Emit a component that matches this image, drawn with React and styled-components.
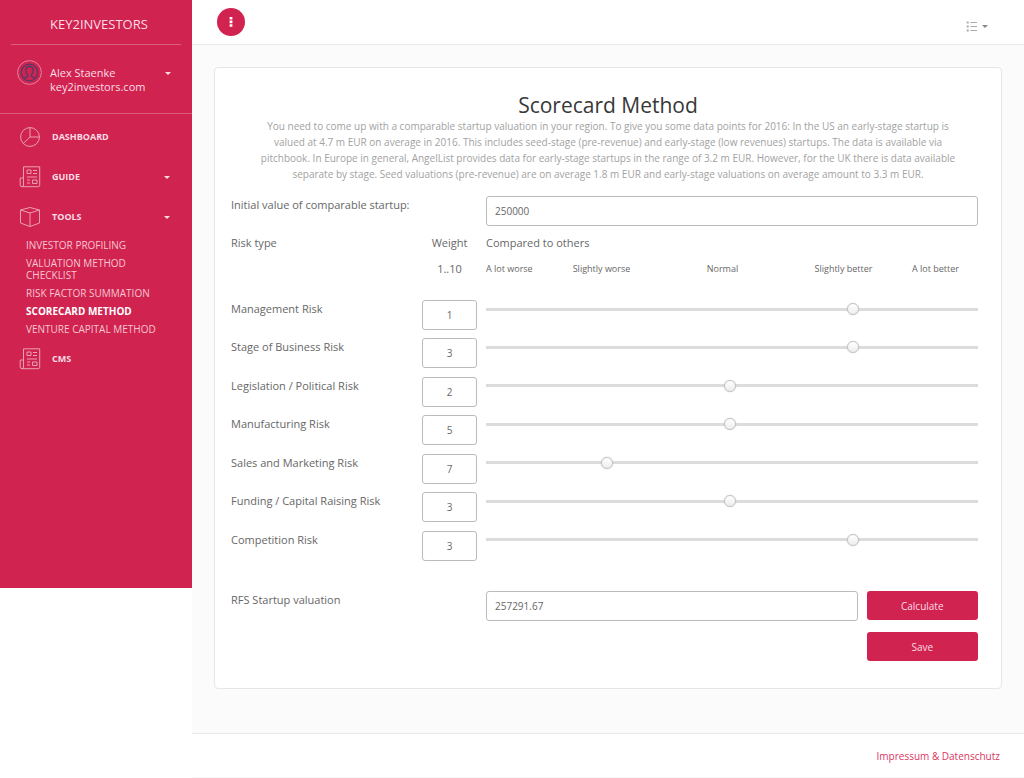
import React, { useState } from 'react';
import styled, { createGlobalStyle } from 'styled-components';

const GlobalStyle = createGlobalStyle`
  * {
    box-sizing: border-box;
  }

  body {
    margin: 0;
    background: #fff;
    color: #676767;
    font-family: 'Open Sans', 'Noto Sans', sans-serif;
    font-size: 11px;
    line-height: 18px;
  }

  input,
  button {
    font: inherit;
  }
`;

const Page = styled.div`
  display: flex;
  align-items: flex-start;
  min-height: 100vh;
`;

const Sidebar = styled.aside`
  flex: 0 0 192px;
  padding-bottom: 209px;
  background: #d02350;
  color: #fbdde5;
`;

const Brand = styled.h1`
  margin: 0 11px;
  padding: 14px 0 10px 39px;
  border-bottom: 1px solid #dd5d7f;
  font-size: 13px;
  line-height: 20px;
  font-weight: 400;
`;

const User = styled.button`
  display: flex;
  align-items: flex-start;
  width: 100%;
  height: 69px;
  padding: 15px 21px 0 17px;
  border: 0;
  border-bottom: 1px solid #dd5d7f;
  background: none;
  color: inherit;
  text-align: left;
  line-height: 14px;
`;

const Avatar = styled.svg`
  flex: none;
  width: 25px;
  height: 25px;
  margin-right: 8px;
`;

const UserName = styled.span`
  flex: 1;
  padding-top: 6px;
`;

const Caret = styled.span`
  border: 3px solid transparent;
  border-top-color: currentColor;
  border-bottom: 0;
`;

const UserCaret = styled(Caret)`
  margin-top: 12px;
`;

const Nav = styled.nav`
  padding-top: 3px;
`;

const NavItem = styled.a`
  display: flex;
  align-items: center;
  gap: 11px;
  height: 40px;
  padding: 0 22px 0 19px;
  color: inherit;
  font-size: 9px;
  font-weight: 700;
  text-decoration: none;

  svg {
    width: 22px;
    height: 22px;
    fill: none;
    stroke: #eb9fb3;
  }

  span:last-child:not(:only-of-type) {
    margin-left: auto;
  }
`;

const SubNav = styled.div`
  display: flex;
  flex-direction: column;
  padding: 0 26px;
`;

const SubItem = styled.a`
  padding: 2px 0 4px;
  color: ${(props) => (props.$active ? '#fff' : '#f6c5d1')};
  font-size: 10px;
  font-weight: ${(props) => (props.$active ? 700 : 400)};
  line-height: 12px;
  text-decoration: none;
`;

const Main = styled.div`
  flex: 1;
  display: flex;
  flex-direction: column;
  min-width: 0;
  min-height: 100vh;
`;

const TopBar = styled.header`
  display: flex;
  align-items: center;
  justify-content: space-between;
  height: 45px;
  padding: 0 36px 0 25px;
  border-bottom: 1px solid #eaeaea;
`;

const RoundButton = styled.button`
  display: flex;
  align-items: center;
  justify-content: center;
  width: 28px;
  height: 28px;
  padding: 0;
  border: 0;
  border-radius: 50%;
  background: #d02350;
  color: #fff;
`;

const ListButton = styled.button`
  display: flex;
  align-items: center;
  gap: 4px;
  padding: 9px 0 0;
  border: 0;
  background: none;
  color: #888;
`;

const Content = styled.main`
  flex: 1;
  padding: 22px 22px 44px;
  background: #fbfbfb;
`;

const Card = styled.form`
  padding: 24px 23px 27px 16px;
  border: 1px solid #e6e6e6;
  border-radius: 4px;
  background: #fff;
`;

const Intro = styled.div`
  margin-bottom: 14px;
  padding: 0 18px 0 25px;
  text-align: center;
`;

const Title = styled.h2`
  margin: 0;
  color: #383838;
  font-size: 21px;
  font-weight: 400;
  line-height: 26px;
`;

const Description = styled.p`
  margin: 0;
  color: #a2a2a2;
  font-size: 10px;
  line-height: 16px;
`;

const Row = styled.div`
  display: grid;
  grid-template-columns: 182fr 55fr 492fr;
  column-gap: 9px;
  align-items: start;
  margin-bottom: ${(props) => props.$space || 0}px;
`;

const Wide = styled.div`
  grid-column: 3;
`;

const Centered = styled.div`
  grid-column: 2;
  text-align: center;
`;

const TextInput = styled.input`
  display: block;
  width: 100%;
  height: 30px;
  padding: 0 8px;
  border: 1px solid #bbb;
  border-radius: 3px;
  background: #fff;
  color: #676767;
  font-size: 10px;
  text-align: ${(props) => (props.$center ? 'center' : 'left')};
`;

const Scale = styled.div`
  grid-column: 3;
  display: grid;
  grid-template-columns: 5fr 11fr 11fr 11fr 5fr;
  padding-right: 19px;
  font-size: 9px;
  text-align: center;
  white-space: nowrap;

  span:first-child {
    text-align: left;
  }

  span:last-child {
    text-align: right;
  }
`;

const Risks = styled.div`
  display: grid;
  grid-auto-rows: 1fr;
  min-height: 269px;
  margin-bottom: 22px;
`;

const Track = styled.div`
  display: flex;
  align-items: center;
  height: 18px;
  border-radius: 2px;
  background: linear-gradient(#dcdcdc, #dcdcdc) center / 100% 3px no-repeat;
`;

const Slider = styled.input`
  appearance: none;
  flex: none;
  width: calc(100% + 12px);
  height: 18px;
  margin: 0 -4px 0 -8px;
  background: none;

  &::-webkit-slider-thumb {
    appearance: none;
    width: 12px;
    height: 12px;
    border: 1px solid #c4c4c4;
    border-radius: 50%;
    background: linear-gradient(#fff, #ededed);
    box-shadow: 0 0 1px #aaa;
  }
`;

const Result = styled.div`
  display: grid;
  grid-template-columns: 10fr 3fr;
  align-items: start;
  gap: 9px;
`;

const Buttons = styled.div`
  display: flex;
  flex-direction: column;
  gap: 12px;
`;

const Button = styled.button`
  height: 29px;
  border: 0;
  border-radius: 3px;
  background: #d02350;
  color: #fbdde5;
  font-size: 10px;
`;

const Footer = styled.footer`
  display: flex;
  align-items: center;
  justify-content: flex-end;
  height: 45px;
  padding: 0 24px;
  border-top: 1px solid #eaeaea;
  border-bottom: 1px solid #f6f6f6;

  a {
    color: #d8365f;
    font-size: 10px;
    text-decoration: none;
  }
`;

const PieIcon = () => (
  <svg viewBox="0 0 22 22" aria-hidden="true">
    <circle cx="11" cy="11" r="9.4" />
    <path d="M11 1.6V11h9.4M11 11l-6.8 6.5" />
  </svg>
);

const NewsIcon = () => (
  <svg viewBox="0 0 22 22" aria-hidden="true">
    <path d="M4.500 19.500V.8h16.200v18.400q0 1.500-1.500 1.500H3q-1.800 0-1.800-1.800V12h3.300M4.500 19q0 1.700-1.500 1.700" />
    <path d="M8 4h4v3.500H8zM14 4.500h4M14 7.500h4M8 11h10M8 14h3M8 17h3M13.500 14H18v3.500h-4.500z" />
  </svg>
);

const BoxIcon = () => (
  <svg viewBox="0 0 22 22" aria-hidden="true">
    <path d="M11 1.500l9.500 2.500v13L11 20.500 1.500 17V4zM1.500 4L11 7l9.500-3M11 7v13.500" />
  </svg>
);

const initialRisks = [
  { name: 'Management Risk', weight: 1, value: 3 },
  { name: 'Stage of Business Risk', weight: 3, value: 3 },
  { name: 'Legislation / Political Risk', weight: 2, value: 2 },
  { name: 'Manufacturing Risk', weight: 5, value: 2 },
  { name: 'Sales and Marketing Risk', weight: 7, value: 1 },
  { name: 'Funding / Capital Raising Risk', weight: 3, value: 2 },
  { name: 'Competition Risk', weight: 3, value: 3 },
];

const tools = [
  'INVESTOR PROFILING',
  'VALUATION METHOD CHECKLIST',
  'RISK FACTOR SUMMATION',
  'SCORECARD METHOD',
  'VENTURE CAPITAL METHOD',
];

export default function App() {
  const [risks, setRisks] = useState(initialRisks);

  const update = (index, key, value) => {
    setRisks(risks.map((risk, i) => (i === index ? { ...risk, [key]: value } : risk)));
  };

  return (
    <Page>
      <GlobalStyle />
      <Sidebar>
        <Brand>KEY2INVESTORS</Brand>
        <User type="button">
          <Avatar viewBox="0 0 25 25" fill="none" aria-hidden="true">
            <circle cx="12.500" cy="12.500" r="11.900" stroke="#e4829c" />
            <circle cx="12.500" cy="12.500" r="8.300" stroke="#4f3c68" strokeWidth="1.300" />
            <path
              d="M7.500 18.200c1-1.200 3.400-1 3.400-2.600 0-1.200-2-1.900-2-5 0-2.700 1.500-4.100 3.600-4.100s3.600 1.400 3.600 4.100c0 3.100-2 3.800-2 5 0 1.600 2.400 1.400 3.400 2.600"
              stroke="#4f3c68"
              strokeWidth="1.300"
            />
          </Avatar>
          <UserName>
            Alex Staenke
            <br />
            key2investors.com
          </UserName>
          <UserCaret />
        </User>
        <Nav>
          <NavItem href="#dashboard">
            <PieIcon />
            <span>DASHBOARD</span>
          </NavItem>
          <NavItem href="#guide">
            <NewsIcon />
            <span>GUIDE</span>
            <Caret />
          </NavItem>
          <NavItem href="#tools">
            <BoxIcon />
            <span>TOOLS</span>
            <Caret />
          </NavItem>
          <SubNav>
            {tools.map((tool) => (
              <SubItem key={tool} href="#tools" $active={tool === 'SCORECARD METHOD'}>
                {tool}
              </SubItem>
            ))}
          </SubNav>
          <NavItem href="#cms">
            <NewsIcon />
            <span>CMS</span>
          </NavItem>
        </Nav>
      </Sidebar>

      <Main>
        <TopBar>
          <RoundButton type="button" aria-label="Toggle menu">
            <svg width="4" height="10" viewBox="0 0 4 10" fill="currentColor">
              <path d="M.6 0h2.800v2.600H.6zM.6 3.600h2.800v2.600H.6zM.6 7.200h2.800v2.600H.6z" />
            </svg>
          </RoundButton>
          <ListButton type="button" aria-label="Options">
            <svg width="12" height="11" viewBox="0 0 12 11" fill="none" stroke="#aaa">
              <path d="M4.500 1.500H11M4.500 5.500H11M4.500 9.500H11" />
              <path d="M.7 1.500h2M.7 5.500h2M.7 9.500h2" strokeWidth="2.200" />
            </svg>
            <Caret />
          </ListButton>
        </TopBar>

        <Content>
          <Card onSubmit={(e) => e.preventDefault()}>
            <Intro>
              <Title>Scorecard Method</Title>
              <Description>
                You need to come up with a comparable startup valuation in your region. To give you
                some data points for 2016: In the US an early-stage startup is valued at 4.7 m EUR
                on average in 2016. This includes seed-stage (pre-revenue) and early-stage (low
                revenues) startups. The data is available via pitchbook. In Europe in general,
                AngelList provides data for early-stage startups in the range of 3.2 m EUR. However,
                for the UK there is data available separate by stage. Seed valuations (pre-revenue)
                are on average 1.8 m EUR and early-stage valuations on average amount to 3.3 m EUR.
              </Description>
            </Intro>

            <Row $space={8}>
              <label htmlFor="initial">Initial value of comparable startup:</label>
              <Wide>
                <TextInput id="initial" defaultValue="250000" />
              </Wide>
            </Row>
            <Row $space={8}>
              <div>Risk type</div>
              <Centered>Weight</Centered>
              <div>Compared to others</div>
            </Row>
            <Row $space={22}>
              <Centered>1..10</Centered>
              <Scale>
                <span>A lot worse</span>
                <span>Slightly worse</span>
                <span>Normal</span>
                <span>Slightly better</span>
                <span>A lot better</span>
              </Scale>
            </Row>

            <Risks>
              {risks.map((risk, index) => (
                <Row key={risk.name}>
                  <label htmlFor={`weight-${index}`}>{risk.name}</label>
                  <TextInput
                    $center
                    id={`weight-${index}`}
                    value={risk.weight}
                    onChange={(e) => update(index, 'weight', e.target.value)}
                  />
                  <Track>
                    <Slider
                      type="range"
                      min="0"
                      max="4"
                      aria-label={`${risk.name} compared to others`}
                      value={risk.value}
                      onChange={(e) => update(index, 'value', Number(e.target.value))}
                    />
                  </Track>
                </Row>
              ))}
            </Risks>

            <Row>
              <label htmlFor="valuation">RFS Startup valuation</label>
              <Wide>
                <Result>
                  <TextInput id="valuation" defaultValue="257291.67" />
                  <Buttons>
                    <Button type="submit">Calculate</Button>
                    <Button type="button">Save</Button>
                  </Buttons>
                </Result>
              </Wide>
            </Row>
          </Card>
        </Content>

        <Footer>
          <a href="#impressum">Impressum &amp; Datenschutz</a>
        </Footer>
      </Main>
    </Page>
  );
}
